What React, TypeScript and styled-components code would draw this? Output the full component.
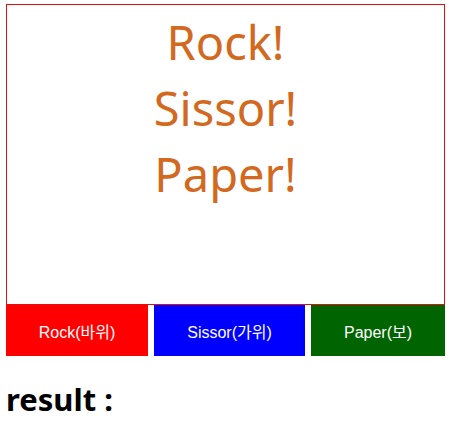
import styled, { createGlobalStyle } from "styled-components";

const GlobalStyle = createGlobalStyle`
  body {
    margin: 0;
    background: #ffffff;
    font-family: "Noto Sans", "Noto Sans CJK KR", sans-serif;
  }
`;

const choices = [
  { label: "Rock(바위)", color: "#ff0000", width: 142 },
  { label: "Sissor(가위)", color: "#0000ff", width: 151 },
  { label: "Paper(보)", color: "#006400", width: 134 },
];

const words = ["Rock!", "Sissor!", "Paper!"];

const App = () => {
  return (
    <Page>
      <GlobalStyle />
      <Game>
        <Board>
          {words.map((word) => (
            <Word key={word}>{word}</Word>
          ))}
        </Board>
        <ButtonRow>
          {choices.map((choice) => (
            <ChoiceButton key={choice.label} $bg={choice.color} $width={choice.width}>
              {choice.label}
            </ChoiceButton>
          ))}
        </ButtonRow>
      </Game>
      <Result>result :</Result>
    </Page>
  );
};

export default App;

const Page = styled.main`
  padding: 4px 6px 0;
`;

const Game = styled.section`
  width: 439px;
`;

const Board = styled.div`
  box-sizing: border-box;
  height: 301px;
  border: 1px solid #e01010;
  padding-top: 4px;
  text-align: center;
`;

const Word = styled.p`
  margin: 0;
  font-size: 47px;
  line-height: 66px;
  font-weight: 400;
  color: #d2691e;
`;

const ButtonRow = styled.div`
  display: flex;
  justify-content: space-between;
  height: 51px;
`;

const ChoiceButton = styled.button<{ $bg: string; $width: number }>`
  width: ${(p) => p.$width}px;
  border: none;
  padding: 0;
  background: ${(p) => p.$bg};
  color: #ffffff;
  font-family: "Liberation Sans", "Noto Sans CJK KR", sans-serif;
  font-size: 16px;
  cursor: pointer;
`;

const Result = styled.h1`
  margin: 22px 0 0;
  font-size: 31px;
  font-weight: 700;
  color: #000000;
`;
